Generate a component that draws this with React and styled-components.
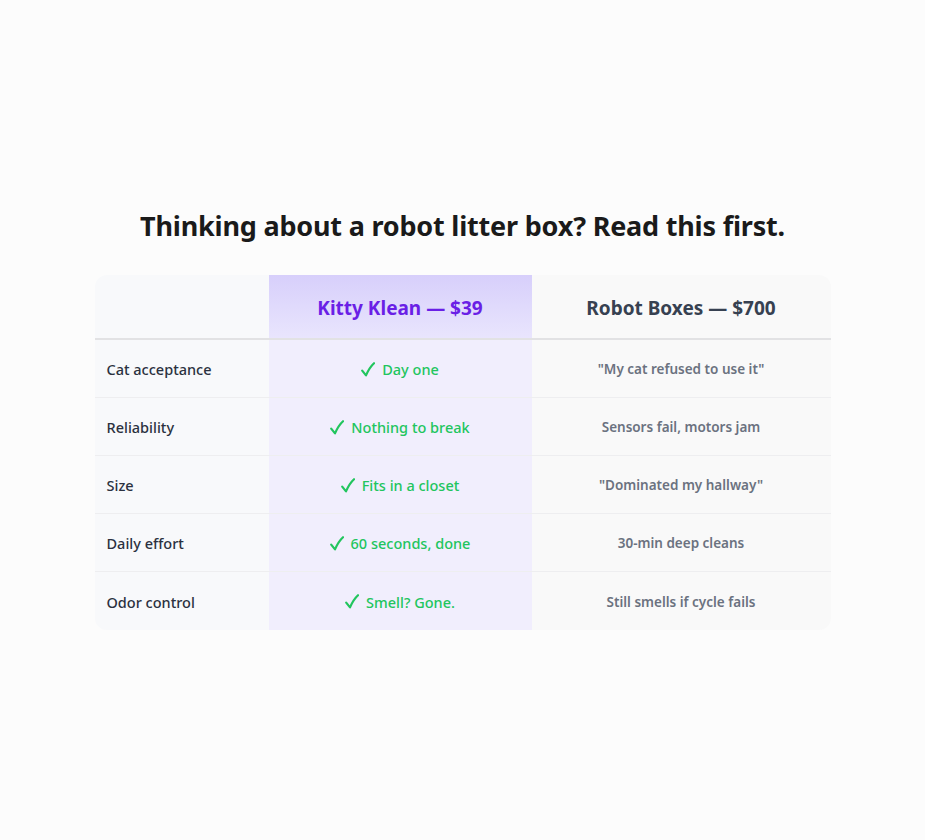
import React from "react";
import styled, { createGlobalStyle } from "styled-components";

const Global = createGlobalStyle`
  html, body { margin: 0; padding: 0; background: #fcfcfc; }
  body { font-family: "Noto Sans", "Open Sans", sans-serif; }
`;

const Page = styled.main`
  min-height: 840px;
  display: flex;
  flex-direction: column;
  align-items: center;
  justify-content: center;
  box-sizing: border-box;
`;

const Title = styled.h2`
  margin: 0 0 34px;
  font-size: 27px;
  line-height: 30px;
  font-weight: 700;
  color: #1a1a1a;
  text-align: center;
  letter-spacing: -0.2px;
`;

const Table = styled.div`
  width: 736px;
  display: grid;
  grid-template-columns: 174px 263px 1fr;
  border-radius: 12px;
  overflow: hidden;
`;

const HeadCell = styled.div`
  box-sizing: border-box;
  height: 65px;
  padding-top: 3px;
  display: flex;
  align-items: center;
  justify-content: center;
  font-size: 19px;
  font-weight: 700;
  border-bottom: 2px solid #e2e2e4;
  background: ${(p) =>
    p.$kind === "us"
      ? "linear-gradient(180deg, #d7cffb 0%, #e9e5fd 100%)"
      : p.$kind === "them"
      ? "#f9f9f9"
      : "#f8f9fb"};
  color: ${(p) => (p.$kind === "us" ? "#6a1fe6" : "#374151")};
`;

const Cell = styled.div`
  box-sizing: border-box;
  height: ${(p) => (p.$first ? "57px" : "58px")};
  padding-top: 2px;
  display: flex;
  align-items: center;
  justify-content: ${(p) => (p.$kind === "label" ? "flex-start" : "center")};
  padding-left: ${(p) => (p.$kind === "label" ? "12px" : "0")};
  border-top: ${(p) => (p.$first ? "none" : "1px solid #eeeef0")};
  background: ${(p) =>
    p.$kind === "us" ? "#f1eefd" : p.$kind === "them" ? "#f9f9f9" : "#f8f9fb"};
  font-size: ${(p) => (p.$kind === "them" ? "13.5px" : "14.5px")};
  font-weight: ${(p) => (p.$kind === "them" ? 600 : 500)};
  color: ${(p) =>
    p.$kind === "us" ? "#22c55e" : p.$kind === "them" ? "#6b7280" : "#2b3140"};

  &:nth-last-child(-n + 3) {
    height: 59px;
  }
`;

const CheckIcon = styled.svg`
  width: 14px;
  height: 15px;
  margin-right: 7px;
  flex: none;
`;

const Check = () => (
  <CheckIcon viewBox="0 0 14 15" aria-hidden="true">
    <path
      d="M1.2 8.6 L5 13.4 C7 8.5 9.5 4.5 13 1.2"
      fill="none"
      stroke="#22c55e"
      strokeWidth="2.2"
      strokeLinecap="round"
      strokeLinejoin="round"
    />
  </CheckIcon>
);

const rows = [
  ["Cat acceptance", "Day one", '"My cat refused to use it"'],
  ["Reliability", "Nothing to break", "Sensors fail, motors jam"],
  ["Size", "Fits in a closet", '"Dominated my hallway"'],
  ["Daily effort", "60 seconds, done", "30-min deep cleans"],
  ["Odor control", "Smell? Gone.", "Still smells if cycle fails"],
];

export default function App() {
  return (
    <>
      <Global />
      <Page>
        <Title>Thinking about a robot litter box? Read this first.</Title>
        <Table>
          <HeadCell $kind="label" />
          <HeadCell $kind="us">Kitty Klean — $39</HeadCell>
          <HeadCell $kind="them">Robot Boxes — $700</HeadCell>
          {rows.map(([label, us, them], i) => (
            <React.Fragment key={label}>
              <Cell $kind="label" $first={i === 0}>{label}</Cell>
              <Cell $kind="us" $first={i === 0}>
                <Check />
                {us}
              </Cell>
              <Cell $kind="them" $first={i === 0}>{them}</Cell>
            </React.Fragment>
          ))}
        </Table>
      </Page>
    </>
  );
}
